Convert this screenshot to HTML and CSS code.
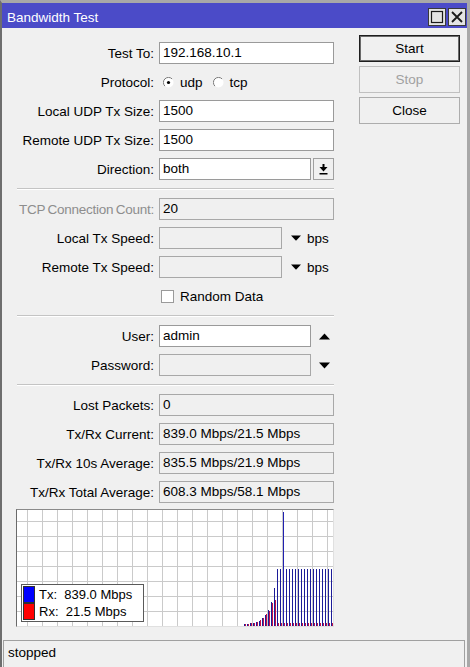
FILE: index.html
```html
<!DOCTYPE html>
<html>
<head>
<meta charset="utf-8">
<title>Bandwidth Test</title>
<link rel="stylesheet" href="styles.css">
</head>
<body>
<div class="window">
  <div class="titlebar">
    <span class="title">Bandwidth Test</span>
    <div class="tb-buttons">
      <span class="tb-btn"><svg width="16" height="16" viewBox="0 0 16 16"><rect x="2.5" y="2.5" width="11" height="11" fill="none" stroke="#1a1a1a" stroke-width="1.2"/></svg></span>
      <span class="tb-btn"><svg width="16" height="16" viewBox="0 0 16 16"><path d="M3 3 L13 13 M13 3 L3 13" stroke="#1a1a1a" stroke-width="1.8" fill="none"/></svg></span>
    </div>
  </div>

  <div class="content">
    <div class="form">
      <div class="group">
        <div class="row"><span class="label">Test To:</span><span class="input">192.168.10.1</span></div>
        <div class="row"><span class="label">Protocol:</span>
          <span class="radios">
            <svg class="radio" width="11" height="11" viewBox="0 0 11 11"><circle cx="5.5" cy="5.5" r="5" fill="#fff"/><path d="M1.9 9.1 A5 5 0 0 1 9.1 1.9" stroke="#7a7a7a" stroke-width="1" fill="none"/><circle cx="5.5" cy="5.5" r="1.6" fill="#000"/></svg>
            <span class="radio-text">udp</span>
            <svg class="radio radio2" width="11" height="11" viewBox="0 0 11 11"><circle cx="5.5" cy="5.5" r="5" fill="#fff"/><path d="M1.9 9.1 A5 5 0 0 1 9.1 1.9" stroke="#7a7a7a" stroke-width="1" fill="none"/></svg>
            <span class="radio-text">tcp</span>
          </span>
        </div>
        <div class="row"><span class="label">Local UDP Tx Size:</span><span class="input">1500</span></div>
        <div class="row"><span class="label">Remote UDP Tx Size:</span><span class="input">1500</span></div>
        <div class="row"><span class="label">Direction:</span><span class="input input-short">both</span>
          <span class="dd-btn"><svg width="9" height="11" viewBox="0 0 9 11"><rect x="3.5" y="0" width="2" height="3" fill="#000"/><polygon points="0.5,3 8.5,3 4.5,7.5" fill="#000"/><rect x="0.5" y="9" width="8" height="1.5" fill="#000"/></svg></span>
        </div>
      </div>
      <div class="sep"></div>
      <div class="group">
        <div class="row"><span class="label label-disabled label-tight">TCP Connection Count:</span><span class="input input-disabled">20</span></div>
        <div class="row"><span class="label">Local Tx Speed:</span><span class="input input-disabled input-speed"></span>
          <svg class="arrow-down" width="10" height="6" viewBox="0 0 10 6"><polygon points="0,0.5 10,0.5 5,5.8" fill="#000"/></svg><span class="unit">bps</span></div>
        <div class="row"><span class="label">Remote Tx Speed:</span><span class="input input-disabled input-speed"></span>
          <svg class="arrow-down" width="10" height="6" viewBox="0 0 10 6"><polygon points="0,0.5 10,0.5 5,5.8" fill="#000"/></svg><span class="unit">bps</span></div>
        <div class="row"><span class="label"></span><span class="checkbox"></span><span class="check-text">Random Data</span></div>
      </div>
      <div class="sep"></div>
      <div class="group">
        <div class="row"><span class="label">User:</span><span class="input input-short">admin</span>
          <svg class="arrow-side" width="11" height="7" viewBox="0 0 11 7"><polygon points="0,6.5 11,6.5 5.5,0.5" fill="#000"/></svg></div>
        <div class="row"><span class="label">Password:</span><span class="input input-short input-disabled"></span>
          <svg class="arrow-side" width="11" height="7" viewBox="0 0 11 7"><polygon points="0,0.5 11,0.5 5.5,6.5" fill="#000"/></svg></div>
      </div>
      <div class="sep"></div>
      <div class="group">
        <div class="row"><span class="label">Lost Packets:</span><span class="input input-disabled">0</span></div>
        <div class="row"><span class="label">Tx/Rx Current:</span><span class="input input-disabled">839.0 Mbps/21.5 Mbps</span></div>
        <div class="row"><span class="label">Tx/Rx 10s Average:</span><span class="input input-disabled">835.5 Mbps/21.9 Mbps</span></div>
        <div class="row"><span class="label">Tx/Rx Total Average:</span><span class="input input-disabled">608.3 Mbps/58.1 Mbps</span></div>
      </div>

      <div class="graph">
        <svg class="graph-svg" width="316" height="116" viewBox="0 0 316 116">
          <defs>
            <pattern id="txp" x="260" y="0" width="3" height="116" patternUnits="userSpaceOnUse"><rect x="0" y="0" width="1" height="116" fill="#1c1c98"/></pattern>
            <pattern id="rxp" x="261" y="0" width="3" height="116" patternUnits="userSpaceOnUse"><rect x="0" y="0" width="1" height="116" fill="#c0104a"/></pattern>
          </defs>
          <g stroke="#cacaca" stroke-width="1">
            <path d="M10.5 0V116M25.5 0V116M40.5 0V116M55.5 0V116M70.5 0V116M85.5 0V116M100.5 0V116M115.5 0V116M130.5 0V116M145.5 0V116M160.5 0V116M175.5 0V116M190.5 0V116M205.5 0V116M220.5 0V116M235.5 0V116M250.5 0V116M265.5 0V116M280.5 0V116M295.5 0V116M310.5 0V116"/>
            <path d="M0 11.5H316M0 26.5H316M0 41.5H316M0 56.5H316M0 71.5H316M0 86.5H316M0 101.5H316"/>
          </g>
          <g fill="#1c1c98">
            <rect x="227" y="114" width="1" height="2"/>
            <rect x="230" y="114" width="1" height="2"/>
            <rect x="233" y="113" width="1" height="3"/>
            <rect x="236" y="113" width="1" height="3"/>
            <rect x="239" y="112" width="1" height="4"/>
            <rect x="242" y="111" width="1" height="5"/>
            <rect x="245" y="108" width="1" height="8"/>
            <rect x="248" y="105" width="1" height="11"/>
            <rect x="251" y="100" width="1" height="16"/>
            <rect x="254" y="92" width="1" height="24"/>
            <rect x="257" y="78" width="1" height="38"/>
            <rect x="260" y="59" width="56" height="57" fill="url(#txp)"/>
            <rect x="266" y="2" width="1" height="114" fill="#2020b0"/>
          </g>
          <g fill="#c0104a">
            <rect x="228" y="114" width="1" height="2"/>
            <rect x="231" y="114" width="1" height="2"/>
            <rect x="234" y="113" width="1" height="3"/>
            <rect x="237" y="113" width="1" height="3"/>
            <rect x="240" y="112" width="1" height="4"/>
            <rect x="243" y="110" width="1" height="6"/>
            <rect x="246" y="108" width="1" height="8"/>
            <rect x="249" y="104" width="1" height="12"/>
            <rect x="252" y="101" width="1" height="15"/>
            <rect x="255" y="93" width="1" height="23"/>
            <rect x="258" y="90" width="1" height="26"/>
            <rect x="261" y="113" width="55" height="3" fill="url(#rxp)"/>
          </g>
        </svg>
        <div class="legend">
          <div class="legend-row"><span class="swatch swatch-tx"></span><span class="legend-text">Tx:&nbsp; 839.0 Mbps</span></div>
          <div class="legend-row"><span class="swatch swatch-rx"></span><span class="legend-text">Rx:&nbsp; 21.5 Mbps</span></div>
        </div>
      </div>
    </div>

    <div class="actions">
      <button class="btn btn-default">Start</button>
      <button class="btn btn-disabled">Stop</button>
      <button class="btn">Close</button>
    </div>
  </div>

  <div class="statusbar">stopped</div>
</div>
</body>
</html>
```

FILE: styles.css
```css
* {
  box-sizing: border-box;
}

html, body {
  margin: 0;
  padding: 0;
}

body {
  background: #f0f0f0;
  font-family: "Liberation Sans", Arial, sans-serif;
  font-size: 13.5px;
  color: #000;
}

.window {
  width: 470px;
  height: 667px;
  overflow: hidden;
  background: #f0f0f0;
  border-top: 3px solid #a8a8a8;
  border-right: 3px solid #a8a8a8;
  border-left: 2px solid #6e6e6e;
}

.titlebar {
  height: 25px;
  background: #4b4bc8;
  display: flex;
  align-items: center;
  padding: 3px 1px 0 5px;
}

.title {
  color: #fff;
  font-size: 13.5px;
}

.tb-buttons {
  margin-left: auto;
  display: flex;
  gap: 2px;
}

.tb-btn {
  width: 18px;
  height: 18px;
  border: 1px solid #3a3a3a;
  background: #e4e4e4;
  display: flex;
  align-items: center;
  justify-content: center;
}

.content {
  display: flex;
  align-items: flex-start;
  padding: 7px 0 0 14px;
}

.form {
  width: 318px;
  margin-top: 7px;
  display: flex;
  flex-direction: column;
}

.group {
  display: flex;
  flex-direction: column;
  gap: 7px;
}

.row {
  display: flex;
  align-items: center;
  height: 22px;
}

.label {
  width: 143px;
  flex: none;
  text-align: right;
  padding-right: 5px;
  white-space: nowrap;
}

.label-disabled {
  color: #8d8d8d;
}

.label-tight {
  letter-spacing: -0.25px;
  word-spacing: -1px;
}

.input {
  width: 175px;
  height: 22px;
  flex: none;
  border: 1px solid #9a9a9a;
  background: #fff;
  padding: 0 3px;
  line-height: 20px;
  white-space: nowrap;
  overflow: hidden;
}

.input-short {
  width: 152px;
}

.input-speed {
  width: 123px;
}

.input-disabled {
  background: #f0f0f0;
  border-color: #a8a8a8;
}

.radios {
  display: flex;
  align-items: center;
}

.radio {
  margin-left: 4px;
  display: block;
}

.radio2 {
  margin-left: 10px;
}

.radio-text {
  margin-left: 6px;
}

.dd-btn {
  width: 21px;
  height: 22px;
  margin-left: 2px;
  border: 1px solid #a0a0a0;
  background: #f0f0f0;
  display: flex;
  align-items: center;
  justify-content: center;
}

.dd-btn svg {
  display: block;
}

.arrow-down {
  display: block;
  margin-left: 9px;
}

.unit {
  margin-left: 6px;
}

.arrow-side {
  display: block;
  margin-left: 8px;
}

.checkbox {
  width: 13px;
  height: 13px;
  margin-left: 2px;
  border: 1px solid #9a9a9a;
  background: #fff;
}

.check-text {
  margin-left: 6px;
}

.sep {
  height: 2px;
  margin: 8px 0 8px 1px;
  width: 317px;
  border-top: 1px solid #c4c4c4;
  border-bottom: 1px solid #ffffff;
}

.graph {
  position: relative;
  width: 318px;
  height: 118px;
  margin-top: 6px;
  background: #fff;
  border-top: 1px solid #8a8a8a;
  border-left: 1px solid #6a6a6a;
  border-right: 1px solid #e0e0e0;
  border-bottom: 1px solid #e0e0e0;
}

.graph-svg {
  display: block;
}

.legend {
  position: absolute;
  left: 4px;
  top: 74px;
  width: 123px;
  height: 38px;
  background: #fff;
  border: 1px solid #5a5a5a;
  padding: 1px 0 0 1px;
}

.legend-row {
  display: flex;
  align-items: center;
  height: 17px;
}

.swatch {
  width: 12px;
  height: 17px;
  flex: none;
  border: 1px solid #303030;
}

.swatch-tx {
  background: #0000ff;
}

.swatch-rx {
  background: #ff0000;
}

.legend-text {
  margin-left: 4px;
  font-size: 13px;
  line-height: 17px;
  white-space: nowrap;
}

.actions {
  margin-left: 25px;
  width: 101px;
  display: flex;
  flex-direction: column;
  gap: 4px;
}

.btn {
  display: block;
  width: 101px;
  height: 27px;
  padding: 0;
  margin: 0;
  border: 1px solid #adadad;
  background: #f0f0f0;
  font-family: "Liberation Sans", Arial, sans-serif;
  font-size: 13.5px;
  color: #000;
}

.btn-default {
  border: 1px solid #1e1e1e;
  box-shadow: inset 0 0 0 1px #6a6a6a;
}

.btn-disabled {
  color: #a0a0a0;
  border-color: #c0c0c0;
}

.statusbar {
  margin: 13px 2px 0 1px;
  height: 40px;
  border: 1px solid #a0a0a0;
  padding: 1px 0 0 4px;
  line-height: 21px;
}
```
